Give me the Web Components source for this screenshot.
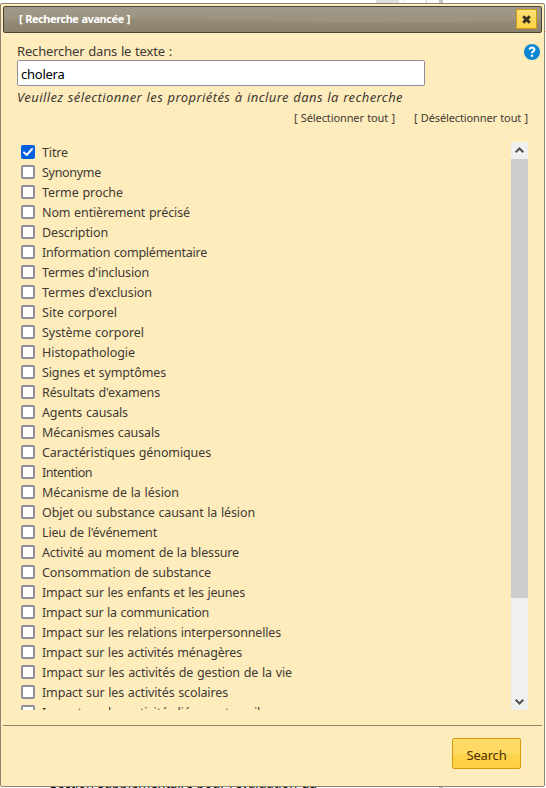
<!DOCTYPE html>
<html lang="fr">
<head>
<meta charset="utf-8">
<title>Recherche avancée</title>
<style>
html,body{margin:0;height:788px;overflow:hidden;background:#fff}
body{font-family:"Noto Sans","Open Sans",sans-serif;color:#3f3a34;display:flow-root;position:relative}
</style>
</head>
<body>
<page-behind></page-behind>
<search-dialog>
  <title-bar slot="header"><fit-text w="111">[ Recherche avancée ]</fit-text></title-bar>
  <search-field slot="field" value="cholera"><fit-text w="155">Rechercher dans le texte :</fit-text></search-field>
  <property-list slot="list"></property-list>
  <gold-button slot="footer">Search</gold-button>
</search-dialog>
<script>
const define=(name,html,setup)=>customElements.define(name,class extends HTMLElement{
  constructor(){super();this.attachShadow({mode:'open'}).innerHTML=html}
  connectedCallback(){if(setup)setup(this,this.shadowRoot)}
});

define('page-behind',`<style>
:host{position:absolute;inset:0;overflow:hidden;display:block}
i{position:absolute;top:0;height:3px;background:#dedede}
p{position:absolute;left:39px;top:773px;margin:0;font:13px/20px "Noto Sans",sans-serif;color:#000;white-space:nowrap;display:flex}
p span{width:11px}
b{position:absolute;left:545px;top:31px;width:1px;height:1px;background:#f4b9b0}
u{position:absolute;left:439px;top:787px;width:4px;height:1px;background:#bbb}
</style><i style="left:376px;width:23px"></i><i style="left:403px;width:1px;background:#eee"></i><i style="left:426px;width:1px;background:#ccc"></i><i style="left:439px;width:4px;background:#c4c4c4"></i><b></b><u></u>
<p><span>•</span><fit-text w="267">Section supplémentaire pour l'évaluation du</fit-text></p>`);

define('search-dialog',`<style>
:host{position:relative;display:flex;flex-direction:column;box-sizing:border-box;width:545px;height:784px;margin-top:3px;padding:2px;border:1px solid #8e846f;border-radius:2px;background:#feecbd}
main{flex:1;display:flex;flex-direction:column;padding:9px 14px 0}
em{font-size:13px;line-height:20px;height:20px;margin-top:2px;white-space:nowrap}
nav{display:flex;justify-content:flex-end;gap:19px;margin-top:1px;height:20px;font-size:11px;line-height:20px}
footer{border-top:1px solid #8e846f;height:59px;display:flex;justify-content:flex-end;padding:12px 21px 0 0;box-sizing:border-box}
</style>
<slot name="header"></slot>
<main><slot name="field"></slot><em><fit-text w="386">Veuillez sélectionner les propriétés à inclure dans la recherche</fit-text></em>
<nav><fit-text w="101">[ Sélectionner tout ]</fit-text><fit-text w="114">[ Désélectionner tout ]</fit-text></nav>
<slot name="list"></slot></main>
<footer><slot name="footer"></slot></footer>`);

define('title-bar',`<style>
:host{display:flex;align-items:center;justify-content:space-between;position:relative;box-sizing:border-box;flex:none;height:27px;border:1px solid #494237;border-radius:2px;background:linear-gradient(#9d9482,#958c79 50%,#8b816d);padding:0 4px 0 15px;overflow:hidden}
.arc{position:absolute;left:0;top:0;width:100%;height:100%}
span{position:relative;color:#fff;font-weight:700;font-size:11px;line-height:20px;top:-1px;white-space:nowrap}
button{position:relative;top:-.5px;width:21px;height:20px;padding:0;border:1px solid #cd9c12;background:linear-gradient(#ffe078,#ffd145);display:flex;align-items:center;justify-content:center}
</style>
<svg class="arc" viewBox="0 0 538 25" preserveAspectRatio="none"><path d="M0 14Q135 9 269 14T538 13V0H0Z" fill="#fff" opacity=".06"/></svg>
<span><slot></slot></span><button aria-label="Fermer"><svg width="11" height="11" viewBox="0 0 11 11"><path d="M2.2 2.2 8.8 8.8M8.8 2.2 2.2 8.8" stroke="#3a3222" stroke-width="3"/></svg></button>`);

define('search-field',`<style>
:host{display:flex;justify-content:space-between;height:43px}
label{font-size:13px;line-height:18px;display:block;height:18px}
input{display:block;box-sizing:border-box;width:408px;height:26px;border:1px solid #8f8f9d;border-radius:2px;padding:2px 3px 0;margin:0;font:13px "Noto Sans",sans-serif;letter-spacing:-.25px;color:#000;outline:none;background:#fff}
svg{margin:2px -12px 0 0}
</style>
<div><label><slot></slot></label><input></div>
<svg width="16" height="16" viewBox="0 0 16 16"><circle cx="8" cy="8" r="8" fill="#0887d0"/><path d="M5.5 5.5Q6 3.6 8.1 3.6 10.5 3.7 10.4 5.6 10.3 6.8 8.9 7.5 8 8 8 9.3" fill="none" stroke="#fff" stroke-width="2"/><path d="M6.9 10.7H9.2V12.8H6.9Z" fill="#fff"/></svg>`,
(h,r)=>{r.querySelector('input').value=h.getAttribute('value')});

define('check-row',`<style>
:host{display:flex;align-items:center;height:20px;gap:7px;font-size:12.5px;line-height:18px;white-space:nowrap}
i{box-sizing:border-box;width:14px;height:14px;border:2px solid #8f8f9d;border-radius:2px;background:#fff}
svg{display:none}
:host([checked]) i{background:#0060df;border:0}
:host([checked]) svg{display:block}
div{padding-top:2px}
</style><i><svg width="14" height="14" viewBox="0 0 14 14"><path d="M3 7.4 5.7 10 11 4" fill="none" stroke="#fff" stroke-width="2" stroke-linecap="round" stroke-linejoin="round"/></svg></i><div><slot></slot></div>`);

define('scroll-bar',`<style>
:host{display:flex;flex-direction:column;width:17px;background:#f0f0f0}
svg{display:block;flex:none}
div{height:439px;background:#cdcdcd;margin-bottom:auto}
</style><svg width="17" height="17" viewBox="0 0 17 17"><path d="M4.7 10.3 8.5 6.5l3.8 3.8" fill="none" stroke="#505050" stroke-width="2"/></svg><div></div><svg width="17" height="17" viewBox="0 0 17 17"><path d="M4.7 6.7 8.5 10.5l3.8-3.8" fill="none" stroke="#505050" stroke-width="2"/></svg>`);

const properties=[['Titre',26],['Synonyme',59],['Terme proche',81],['Nom entièrement précisé',148],['Description',66],['Information complémentaire',165],['Termes d\'inclusion',107],['Termes d\'exclusion',110],['Site corporel',75],['Système corporel',102],['Histopathologie',93],['Signes et symptômes',124],['Résultats d\'examens',118],['Agents causals',86],['Mécanismes causals',118],['Caractéristiques génomiques',169],['Intention',50],['Mécanisme de la lésion',137],['Objet ou substance causant la lésion',213],['Lieu de l\'événement',115],['Activité au moment de la blessure',197],['Consommation de substance',169],['Impact sur les enfants et les jeunes',203],['Impact sur la communication',167],['Impact sur les relations interpersonnelles',239],['Impact sur les activités ménagères',200],['Impact sur les activités de gestion de la vie',250],['Impact sur les activités scolaires',186],['Impact sur les activités liées au travail',218]];
define('property-list',`<style>
:host{display:flex;height:568px;margin-top:14px;overflow:hidden}
section{flex:1;overflow:hidden;padding-left:4px}
</style><section>${properties.map(([n,w],i)=>`<check-row${i?'':' checked'}><fit-text w="${w}">${n}</fit-text></check-row>`).join('')}</section><scroll-bar></scroll-bar>`);

define('gold-button',`<style>
button{box-sizing:border-box;width:69px;height:31px;border:1px solid #d59a07;border-radius:2px;background:linear-gradient(#ffdc6b,#ffd95f 52%,#ffd34c 56%,#ffd03e);font:13px "Noto Sans",sans-serif;letter-spacing:-.2px;color:#4c3000;padding:2px 0 0;display:block}
</style><button><slot></slot></button>`);

// Spreads a line of text over the width given in its "w" attribute.
define('fit-text',`<style>
:host{display:inline-block;white-space:nowrap}
span{display:inline-block;word-spacing:.6px}
</style><span><slot></slot></span>`,(h,r)=>{
  const s=r.querySelector('span'),w=+h.getAttribute('w');
  s.style.letterSpacing=(w-s.getBoundingClientRect().width)/h.textContent.length+'px';
  h.style.width=w+'px';
});
</script>
</body>
</html>
